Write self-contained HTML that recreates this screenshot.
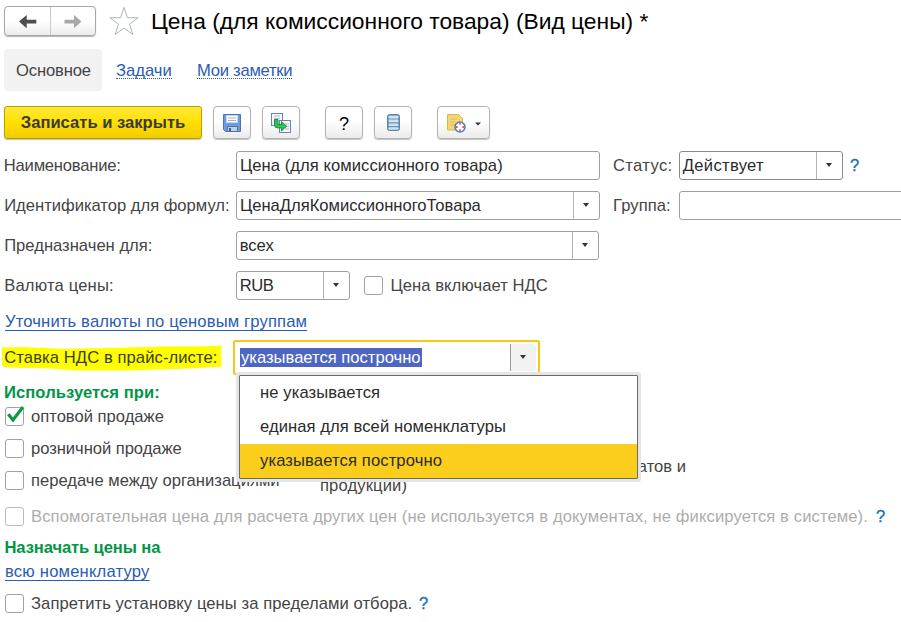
<!DOCTYPE html>
<html lang="ru">
<head>
<meta charset="utf-8">
<title>Цена (для комиссионного товара) (Вид цены) *</title>
<style>
*{box-sizing:border-box;margin:0;padding:0}
html,body{width:901px;height:622px;overflow:hidden;background:#fff}
body{font-family:"Liberation Sans",Arial,sans-serif;font-size:16.6px;color:#444;position:relative}
.a{position:absolute;white-space:nowrap;line-height:20px;margin-top:1px}
.t{position:absolute;white-space:nowrap;line-height:20px;height:20px}
.inp{position:absolute;border:1px solid #a0a0a0;border-radius:3px;background:#fff;height:29px}
.inp .v{position:absolute;left:3.5px;top:4px;line-height:20px;color:#2b2b2b;white-space:nowrap}
.dd{position:absolute;right:0;top:0;bottom:0;width:26px;border-left:1px solid #b4b4b4}
.dd:after{content:"";position:absolute;left:9px;top:11px;border:3.5px solid transparent;border-top:4px solid #333;border-bottom:0}
.cb{position:absolute;width:19px;height:19px;border:1px solid #a2a2a2;border-radius:3px;background:#fff}
.btn{position:absolute;top:106px;height:33px;border:1px solid #b3b3b3;border-radius:4px;background:linear-gradient(#fff,#fff 45%,#ebebeb);box-shadow:0 1px 1px rgba(0,0,0,.25)}
.lnk{color:#2a5cb3;text-decoration:underline;text-decoration-thickness:1px;text-underline-offset:3px}
.q{color:#1470bd;-webkit-text-stroke:.3px #1470bd}
.g{color:#009646;font-weight:bold}
.dis{color:#adadad}
</style>
</head>
<body>
<!-- nav -->
<div id="nav" style="position:absolute;left:4px;top:6px;width:92px;height:30px;border:1px solid #a9a9a9;border-radius:4px;background:linear-gradient(#fff,#fff 50%,#ececec);box-shadow:0 1px 1px rgba(0,0,0,.3)">
  <div style="position:absolute;left:45px;top:0;bottom:0;width:1px;background:#c8c8c8"></div>
  <svg style="position:absolute;left:0;top:0" width="92" height="30" viewBox="0 0 92 30">
    <path d="M14 14.500 L21.700 8 L21.700 12.700 L31.300 12.700 L31.300 16.400 L21.700 16.400 L21.700 21.200 Z" fill="#4d4d4d"/>
    <path d="M76.5 14.5 L69 8 L69 12.8 L59.5 12.8 L59.5 16.4 L69 16.4 L69 21.2 Z" fill="#a8a8a8"/>
  </svg>
</div>
<svg id="star" style="position:absolute;left:109px;top:6px" width="30" height="30" viewBox="0 0 30 30">
  <path d="M15 1.4 L18.4 11.700 L29.200 11.700 L20.500 18.100 L23.900 28.400 L15 22.100 L6.100 28.400 L9.500 18.100 L0.800 11.700 L11.600 11.700 Z" fill="#fff" stroke="#a9b4bf" stroke-width="1"/>
</svg>
<div id="title" class="a" style="left:151px;top:4.700px;font-size:22.8px;line-height:30px;color:#000">Цена (для комиссионного товара) (Вид цены) *</div>

<!-- tabs -->
<div id="tabbg" style="position:absolute;left:4px;top:49px;width:98px;height:42px;background:#f2f2f2;border-radius:4px"></div>
<div id="tab1" class="a" style="left:16px;top:60px;letter-spacing:-0.14px">Основное</div>
<div id="tab2" class="a" style="left:116px;top:60px;color:#2a5cb3;border-bottom:1px dotted #2a5cb3;height:18px">Задачи</div>
<div id="tab3" class="a" style="left:197px;top:60px;color:#2a5cb3;border-bottom:1px dotted #2a5cb3;height:18px;letter-spacing:-0.26px">Мои заметки</div>

<!-- toolbar -->
<div id="save" class="btn" style="left:4px;width:198px;border-color:#b9a000;border-radius:3px;background:linear-gradient(#ffe83a,#ffe000 50%,#f2cc00);text-align:center;font-weight:bold;line-height:31px;color:#3a3a3a;font-size:16.6px">Записать и закрыть</div>
<div id="b1" class="btn" style="left:213px;width:38px">
 <svg width="36" height="30" viewBox="0 0 36 30" style="position:absolute;left:0;top:0">
  <path d="M9.500 7.500 H26.500 V24.500 H11.500 L9.500 22.500 Z" fill="#6f9bd8" stroke="#4a74b4" stroke-width="1"/>
  <rect x="12.500" y="8.500" width="11" height="7" fill="#fff" stroke="#c6d6ee" stroke-width="1"/>
  <path d="M14 11h8M14 13.500h8" stroke="#9bb4d8" stroke-width="1"/>
  <rect x="13.500" y="19.500" width="10" height="5" fill="#c9cfd6" stroke="#4a74b4" stroke-width="1"/>
  <rect x="15" y="21" width="2" height="3" fill="#2f5da0"/>
 </svg>
</div>
<div id="b2" class="btn" style="left:262px;width:38px">
 <svg width="36" height="30" viewBox="0 0 36 30" style="position:absolute;left:-1px;top:0">
  <rect x="9.5" y="6.5" width="11" height="12" fill="#f4f6fa" stroke="#6f85a8"/>
  <path d="M12 9h6M12 11.5h6" stroke="#b3bfd2"/>
  <rect x="17.500" y="13.500" width="11" height="12" fill="#f4f6fa" stroke="#6f85a8"/>
  <path d="M23 17h4M23 19.500h4M23 22h4" stroke="#b3bfd2"/>
  <path d="M12.500 12.500 h3.500 v5 h3.500 v-3 l5 4.700 l-5 4.700 v-3 h-4 q-3 0 -3 -3.400 z" fill="#2fc45a" stroke="#1b8f3c" stroke-width="1"/>
 </svg>
</div>
<div id="b3" class="btn" style="left:325px;width:38px;text-align:center;line-height:34px;color:#000;font-size:18px">?</div>
<div id="b4" class="btn" style="left:374px;width:38px">
 <svg width="36" height="30" viewBox="0 0 36 30" style="position:absolute;left:0;top:0">
  <rect x="12.500" y="7.500" width="12" height="16" rx="2" fill="#6f95ba" stroke="#5b82a8"/>
  <rect x="13.500" y="8.800" width="10" height="2.600" rx="1" fill="#cfe2f2"/>
  <rect x="13.500" y="12.600" width="10" height="2.600" rx="1" fill="#cfe2f2"/>
  <rect x="13.500" y="16.400" width="10" height="2.600" rx="1" fill="#cfe2f2"/>
  <rect x="13.500" y="20.200" width="10" height="2.600" rx="1" fill="#cfe2f2"/>
 </svg>
</div>
<div id="b5" class="btn" style="left:437px;width:53px">
 <svg width="51" height="30" viewBox="0 0 51 30" style="position:absolute;left:0;top:0">
  <path d="M9.500 7.500 h11 l4 4 v11.500 h-15 z" fill="#f3d675" stroke="#d9b64e"/>
  <path d="M12 12h8M12 15h6M12 18h5" stroke="#e0c060"/>
  <circle cx="22" cy="20" r="5" fill="#fff" stroke="#4f7fc0" stroke-width="1.600"/>
  <circle cx="22" cy="16.800" r=".9" fill="#e03030"/><circle cx="22" cy="23.200" r=".9" fill="#e03030"/>
  <circle cx="18.800" cy="20" r=".9" fill="#e03030"/><circle cx="25.200" cy="20" r=".9" fill="#e03030"/>
  <path d="M37 15.500 h6 l-3 3 z" fill="#333"/>
 </svg>
</div>

<!-- row 1 -->
<div id="l1" class="a" style="left:3.8px;top:155px;letter-spacing:-0.21px">Наименование:</div>
<div id="i1" class="inp" style="left:236px;top:151px;width:364px"><span class="v" style="left:3px;letter-spacing:0.055px;">Цена (для комиссионного товара)</span></div>
<div id="l1b" class="a" style="left:613px;top:155px;letter-spacing:0.35px">Статус:</div>
<div id="i1b" class="inp" style="left:679px;top:151px;width:164px;border-color:#8c8c8c"><span class="v" style="left:2.700px;letter-spacing:.32px">Действует</span><div class="dd"></div></div>
<div id="q1" class="a q" style="left:850px;top:155px">?</div>

<!-- row 2 -->
<div id="l2" class="a" style="left:4.2px;top:195px;letter-spacing:-0.01px">Идентификатор для формул:</div>
<div id="i2" class="inp" style="left:236px;top:191px;width:364px"><span class="v" style="left:3px;letter-spacing:-0.02px;">ЦенаДляКомиссионногоТовара</span><div class="dd"></div></div>
<div id="l2b" class="a" style="left:613px;top:195px;letter-spacing:0.08px">Группа:</div>
<div id="i2b" class="inp" style="left:679px;top:191px;width:240px"></div>

<!-- row 3 -->
<div id="l3" class="a" style="left:4.2px;top:235px">Предназначен для:</div>
<div id="i3" class="inp" style="left:236px;top:231px;width:363px"><span class="v" style="left:2.7px;">всех</span><div class="dd"></div></div>

<!-- row 4 -->
<div id="l4" class="a" style="left:4.2px;top:275px;letter-spacing:0.17px">Валюта цены:</div>
<div id="i4" class="inp" style="left:236px;top:271px;width:114px"><span class="v" style="left:2.7px;letter-spacing:-0.5px;">RUB</span><div class="dd"></div></div>
<div id="c4" class="cb" style="left:364px;top:276px"></div>
<div id="l4b" class="a" style="left:390.5px;top:275px;letter-spacing:0.05px">Цена включает НДС</div>

<div id="lnk1" class="a lnk" style="left:5px;top:311px;letter-spacing:0.15px">Уточнить валюты по ценовым группам</div>

<!-- stavka -->
<svg id="hl" style="position:absolute;left:0;top:340px" width="230" height="36" viewBox="0 0 230 36"><polygon points="2,7.500 20,7 64,8.800 110,8 160,6.600 205,6.200 221.300,5.600 221.300,26.800 190,28.600 130,30.600 75,30.600 50,28.600 8,27.600 2,26.600" fill="#ffff00"/></svg>
<div id="l5" class="a" style="left:4.300px;top:347px;letter-spacing:0.08px;color:#3d3d10">Ставка НДС в прайс-листе:</div>
<div id="i5" class="inp" style="left:233px;top:340px;width:307px;height:35px;border:2px solid #f8c71c;border-radius:2px">
  <span class="v" style="left:5px;top:6px;height:19px;line-height:19px;background:#4e66c3;color:#fff;padding:0 1px">указывается построчно</span>
  <div class="dd" style="top:2px;bottom:2px;right:2px;width:26px;background:#f2f2f2;border-left:1px solid #9a9a9a;border-radius:0 3px 3px 0"></div>
</div>

<!-- used with -->
<div id="g1" class="a g" style="left:4px;top:382px;letter-spacing:0.06px">Используется при:</div>
<div id="c5" class="cb" style="left:5px;top:407px"><svg width="19" height="19" viewBox="0 0 19 19" style="position:absolute;left:0;top:-2px;overflow:visible"><path d="M2.300 8.300 L7 14 L17 1" fill="none" stroke="#0c9a40" stroke-width="3.200"/></svg></div>
<div id="l6" class="a" style="left:31px;top:406px">оптовой продаже</div>
<div id="c6" class="cb" style="left:5px;top:439px"></div>
<div id="l7" class="a" style="left:31px;top:438px;letter-spacing:-0.05px">розничной продаже</div>
<div id="c7" class="cb" style="left:5px;top:471px"></div>
<div id="l8" class="a" style="left:31px;top:470px">передаче между организациями</div>
<div id="l8b" class="a" style="right:215px;top:456px">выпуске продукции (оценка полуфабрикатов и</div>
<div id="l8c" class="a" style="left:320px;top:475px;letter-spacing:0.12px">продукции)</div>

<div id="c9" class="cb" style="left:5px;top:507px;border-color:#bcbcbc"></div>
<div id="l9" class="a dis" style="left:31px;top:506px;letter-spacing:0.1px">Вспомогательная цена для расчета других цен (не используется в документах, не фиксируется в системе).</div>
<div id="q9" class="a q" style="left:876px;top:506px">?</div>

<div id="g2" class="a g" style="left:4.5px;top:537px;letter-spacing:-0.12px">Назначать цены на</div>
<div id="lnk2" class="a lnk" style="left:5px;top:561px;letter-spacing:0.2px">всю номенклатуру</div>

<div id="c10" class="cb" style="left:5px;top:594px"></div>
<div id="l10" class="a" style="left:31px;top:593px;letter-spacing:0.07px">Запретить установку цены за пределами отбора.</div>
<div id="q10" class="a q" style="left:419px;top:593px">?</div>

<!-- dropdown -->
<div id="pop" style="position:absolute;left:239px;top:375px;width:399px;height:104px;background:#fff;border:1px solid #6b6b6b;box-shadow:0 0 0 3px #e5e5e5;border-radius:1px">
  <div class="a" style="left:20px;top:6px;color:#2b2b2b;letter-spacing:.1px">не указывается</div>
  <div class="a" style="left:20px;top:40px;color:#2b2b2b;letter-spacing:.07px">единая для всей номенклатуры</div>
  <div style="position:absolute;left:0;right:0;top:68px;height:34px;background:#fbce1e"></div>
  <div class="a" style="left:20px;top:74px;color:#2b2b2b;letter-spacing:.12px">указывается построчно</div>
</div>
</body>
</html>
